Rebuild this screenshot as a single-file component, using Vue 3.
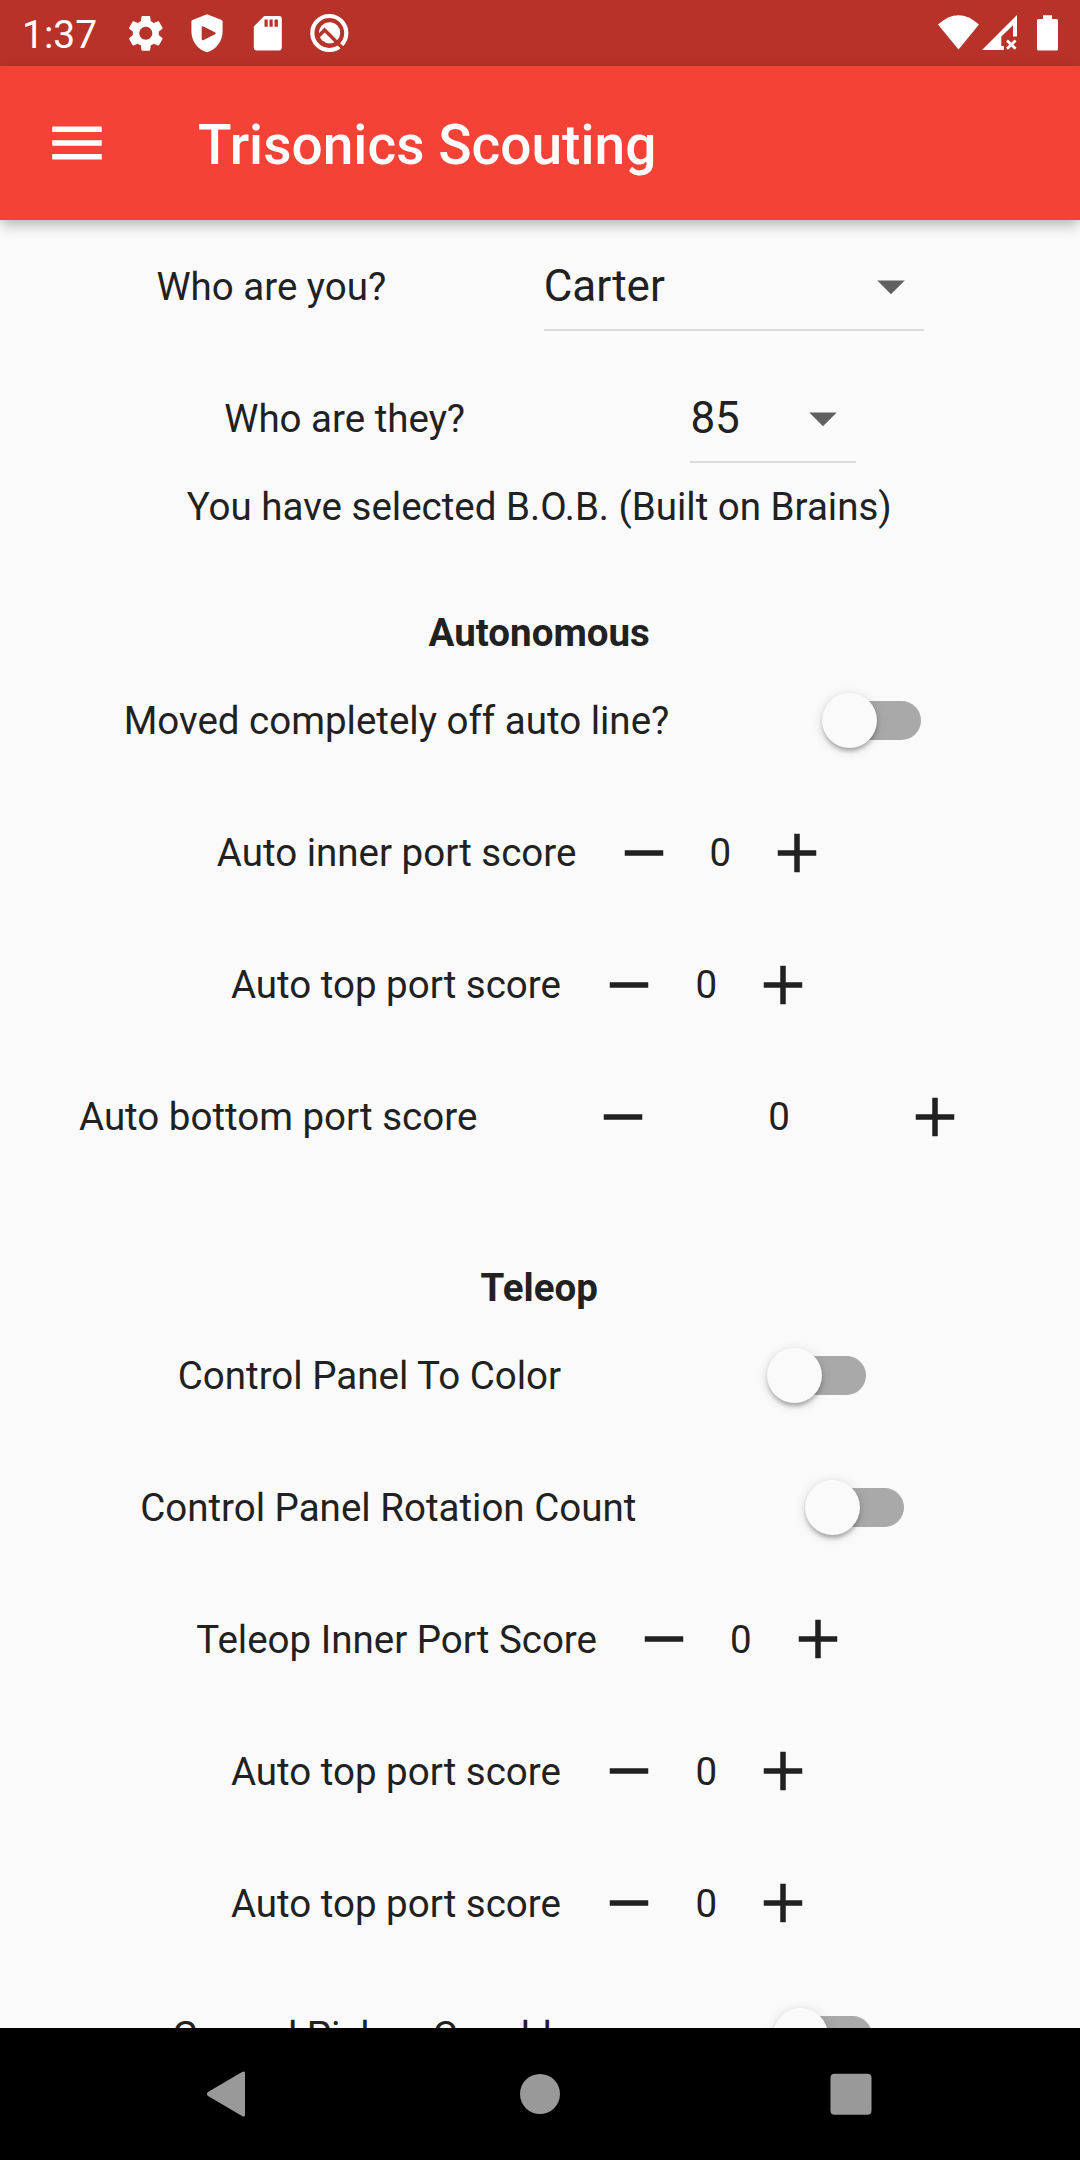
<script setup>
const autoRows = [
  { label: 'Moved completely off auto line?', kind: 'switch' },
  { label: 'Auto inner port score', kind: 'count' },
  { label: 'Auto top port score', kind: 'count', loose: true },
  { label: 'Auto bottom port score', kind: 'count', spread: true },
]
const teleopRows = [
  { label: 'Control Panel To Color', kind: 'switch' },
  { label: 'Control Panel Rotation Count', kind: 'switch' },
  { label: 'Teleop Inner Port Score', kind: 'count' },
  { label: 'Auto top port score', kind: 'count', loose: true },
  { label: 'Auto top port score', kind: 'count', loose: true },
  { label: 'Ground Pickup Capable', kind: 'switch' },
]
const sections = [
  { title: 'Autonomous', rows: autoRows },
  { title: 'Teleop', rows: teleopRows },
]
const pickers = [
  { label: 'Who are you?', value: 'Carter', size: 'wide' },
  { label: 'Who are they?', value: '85', size: 'narrow' },
]
</script>

<template>
  <div class="screen">
    <div class="status">
      <span class="time">1:37</span>
      <div class="notif">
        <svg width="44" height="44" viewBox="0 0 24.4 24.4" fill="#fff">
          <path transform="translate(.1 .4)" d="M19.14,12.94c0.04,-0.3 0.06,-0.61 0.06,-0.94c0,-0.32 -0.02,-0.64 -0.07,-0.94l2.03,-1.58c0.18,-0.14 0.23,-0.41 0.12,-0.61l-1.92,-3.32c-0.12,-0.22 -0.37,-0.29 -0.59,-0.22l-2.39,0.96c-0.5,-0.38 -1.03,-0.7 -1.62,-0.94L14.4,2.81c-0.04,-0.24 -0.24,-0.41 -0.48,-0.41h-3.84c-0.24,0 -0.43,0.17 -0.47,0.41L9.25,5.35C8.66,5.59 8.12,5.92 7.63,6.29L5.24,5.33c-0.22,-0.08 -0.47,0 -0.59,0.22L2.74,8.87C2.62,9.08 2.66,9.34 2.86,9.48l2.03,1.58C4.84,11.36 4.8,11.69 4.8,12s0.02,0.64 0.07,0.94l-2.03,1.58c-0.18,0.14 -0.23,0.41 -0.12,0.61l1.92,3.32c0.12,0.22 0.37,0.29 0.59,0.22l2.39,-0.96c0.5,0.38 1.03,0.7 1.62,0.94l0.36,2.54c0.05,0.24 0.24,0.41 0.48,0.41h3.84c0.24,0 0.44,-0.17 0.47,-0.41l0.36,-2.54c0.59,-0.24 1.13,-0.56 1.62,-0.94l2.39,0.96c0.22,0.08 0.47,0 0.59,-0.22l1.92,-3.32c0.12,-0.22 0.07,-0.47 -0.12,-0.61L19.14,12.94zM12,15.6c-1.98,0 -3.6,-1.62 -3.6,-3.6s1.62,-3.6 3.6,-3.6s3.6,1.62 3.6,3.6S13.98,15.6 12,15.6z" />
        </svg>
        <svg width="44" height="44" viewBox="0 0 44 44">
          <path fill="#fff" fill-rule="evenodd" d="M22 3.2L36.6 9Q37.6 9.5 37.6 10.6V20C37.6 30 31.5 38.5 22 41.2C12.5 38.5 6.4 30 6.4 20V10.6Q6.4 9.5 7.4 9ZM16.7 16.3V28Q16.8 29.8 18.5 29L30 23.3Q31.6 22.3 30 21.3L18.5 15.4Q16.8 14.6 16.7 16.3Z" />
        </svg>
        <svg width="44" height="44" viewBox="0 0 44 44">
          <path fill="#fff" fill-rule="evenodd" d="M18.2 5H33.2Q35.8 5 35.8 7.6V36.6Q35.8 39.4 33.2 39.4H10.4Q7.8 39.4 7.8 36.6V15.4ZM18.5 8.5V15.8H21.7V8.5ZM23.5 8.5V15.8H26.7V8.5ZM28.5 8.5V15.8H31.9V8.5Z" />
        </svg>
        <svg width="44" height="44" viewBox="0 0 44 44">
          <circle cx="22.3" cy="22" r="17" fill="none" stroke="#fff" stroke-width="4.2" />
          <circle cx="22.6" cy="21.8" r="10.6" fill="#fff" />
          <path d="M11 25.8L17.6 19L37 38.4" fill="none" stroke="#b73229" stroke-width="3.4" />
        </svg>
      </div>
      <svg class="signals" width="124" height="44" viewBox="936 11 124 44" fill="#fff">
        <path d="M938 24.5Q958.5 6 979 24.5L958.5 49.5Z" />
        <path d="M982 50L1017 15V36.5H1013V25.2L1001.3 36.5V46H1003.8V50Z" />
        <path d="M1007 40.5L1015.6 48.7M1015.6 40.5L1007 48.7" stroke="#fff" stroke-width="2.8" />
        <path d="M1043 15.3H1052V19H1056.5Q1058 19 1058 20.5V49Q1058 50.6 1056.5 50.6H1038.5Q1037 50.6 1037 49V20.5Q1037 19 1038.5 19H1043Z" />
      </svg>
    </div>

    <header class="appbar">
      <svg width="66" height="66" viewBox="0 0 24 24" fill="#fff"><path d="M3 18h18v-2H3v2zm0-5h18v-2H3v2zm0-7v2h18V6H3z" /></svg>
      <h1>Trisonics Scouting</h1>
    </header>

    <main class="body">
      <div v-for="p in pickers" :key="p.label" class="row even">
        <span class="label">{{ p.label }}</span>
        <div class="picker" :class="p.size">
          <span>{{ p.value }}</span>
          <svg width="66" height="66" viewBox="0 0 24 24" fill="#616161"><path d="M7 10l5 5 5-5z" /></svg>
        </div>
      </div>
      <p class="line">You have selected B.O.B. (Built on Brains)</p>

      <section v-for="s in sections" :key="s.title">
        <h2 class="line">{{ s.title }}</h2>
        <div
          v-for="(r, i) in s.rows"
          :key="i"
          class="row"
          :class="{ even: r.kind === 'switch' || r.spread }"
        >
          <span class="label" :class="{ loose: r.loose }">{{ r.label }}</span>
          <div v-if="r.kind === 'switch'" class="switch">
            <div class="track"><div class="thumb"></div></div>
          </div>
          <template v-else>
            <div class="btn">
              <svg width="66" height="66" viewBox="0 0 24 24" fill="#212121"><path d="M19 13H5v-2h14v2z" /></svg>
            </div>
            <span>0</span>
            <div class="btn">
              <svg width="66" height="66" viewBox="0 0 24 24" fill="#212121"><path d="M19 13h-6v6h-2v-6H5v-2h6V5h2v6h6v2z" /></svg>
            </div>
          </template>
        </div>
      </section>
    </main>

    <nav class="nav">
      <svg width="42" height="48" viewBox="0 0 42 48" fill="#999"><path d="M36 2Q39 .6 39 3V45Q39 47.4 36 46L2 26Q-.2 24 2 22Z" /></svg>
      <svg width="44" height="48" viewBox="0 0 44 48" fill="#999"><circle cx="23" cy="24" r="20" /></svg>
      <svg width="42" height="48" viewBox="0 0 42 48" fill="#999"><rect x=".5" y="3.8" width="41" height="41" rx="4" /></svg>
    </nav>
  </div>
</template>

<style>
body {
  margin: 0;
}
</style>

<style scoped>
.screen {
  width: 1080px;
  height: 2160px;
  display: flex;
  flex-direction: column;
  overflow: hidden;
  background: #fafafa;
  color: #212121;
  font: 400 38.5px/45px Roboto, sans-serif;
}
svg {
  display: block;
  flex: none;
}
.status {
  flex: none;
  box-sizing: border-box;
  height: 66px;
  padding: 0 20px 0 22px;
  display: flex;
  align-items: center;
  background: #b73229;
  color: #fff;
}
.time {
  width: 102px;
  font-size: 39px;
  padding-top: 5px;
}
.notif {
  display: flex;
  gap: 17px;
}
.signals {
  margin-left: auto;
}
.appbar {
  flex: none;
  box-sizing: border-box;
  height: 154px;
  padding-left: 44px;
  display: flex;
  align-items: center;
  gap: 88px;
  background: #f44336;
  color: #fff;
  z-index: 1;
  box-shadow: 0 5px 11px -3px rgba(0, 0, 0, 0.18), 0 9px 12px rgba(0, 0, 0, 0.08),
    0 3px 16px rgba(0, 0, 0, 0.08);
}
h1 {
  margin: 0;
  padding-top: 3px;
  font-size: 55px;
  line-height: 64px;
  font-weight: 500;
  letter-spacing: 0.03px;
}
.body {
  flex: 1;
  min-height: 0;
  overflow: hidden;
}
.row {
  height: 132px;
  display: flex;
  align-items: center;
  justify-content: center;
  white-space: nowrap;
}
.row.even {
  justify-content: space-evenly;
}
.label {
  padding-right: 1.1px;
}
.label.loose {
  padding-right: 2.6px;
}
.picker {
  box-sizing: border-box;
  height: 90px;
  display: flex;
  align-items: center;
  justify-content: space-between;
  font-size: 44px;
  line-height: 52px;
  border-bottom: 2px solid #dbdbdb;
  padding-top: 2px;
}
.wide {
  width: 380px;
}
.narrow {
  width: 165.4px;
}
.line {
  margin: 0;
  padding-right: 1.6px;
  font-size: 38.5px;
  line-height: 45px;
  text-align: center;
}
h2.line {
  height: 44.6px;
  font-weight: 700;
  padding-top: 81px;
}
section + section h2.line {
  height: 44.5px;
  padding-top: 82.4px;
}
.switch {
  width: 162.25px;
  display: flex;
  justify-content: center;
}
.track {
  width: 90.75px;
  height: 38.5px;
  border-radius: 20px;
  background: #a9a9a9;
  display: flex;
  align-items: center;
}
.thumb {
  flex: none;
  width: 55px;
  height: 55px;
  margin-left: -8.25px;
  border-radius: 50%;
  background: #fafafa;
  box-shadow: 0 5px 5px -3px rgba(0, 0, 0, 0.2), 0 3px 4px rgba(0, 0, 0, 0.14),
    0 2px 12px rgba(0, 0, 0, 0.14);
}
.btn {
  width: 132px;
  display: flex;
  justify-content: center;
}
.nav {
  flex: none;
  height: 132px;
  box-sizing: border-box;
  padding: 0 208px 0 205.5px;
  display: flex;
  align-items: center;
  justify-content: space-between;
  background: #000;
}
</style>
